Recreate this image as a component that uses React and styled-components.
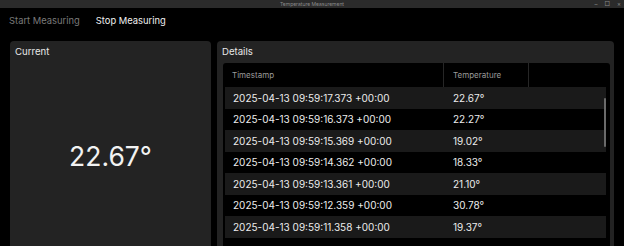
import React from 'react'
import styled, { createGlobalStyle } from 'styled-components'

const readings = [
  { time: '2025-04-13 09:59:17.373 +00:00', temp: '22.67°' },
  { time: '2025-04-13 09:59:16.373 +00:00', temp: '22.27°' },
  { time: '2025-04-13 09:59:15.369 +00:00', temp: '19.02°' },
  { time: '2025-04-13 09:59:14.362 +00:00', temp: '18.33°' },
  { time: '2025-04-13 09:59:13.361 +00:00', temp: '21.10°' },
  { time: '2025-04-13 09:59:12.359 +00:00', temp: '30.78°' },
  { time: '2025-04-13 09:59:11.358 +00:00', temp: '19.37°' },
]

const App = () => {
  return (
    <>
      <GlobalStyle />
      <Window>
        <TitleBar>
          <TitleText>Temperature Measurement</TitleText>
          <Controls>
            <span>–</span>
            <span>□</span>
            <span>×</span>
          </Controls>
        </TitleBar>
        <Toolbar>
          <ToolButton disabled>Start Measuring</ToolButton>
          <ToolButton>Stop Measuring</ToolButton>
        </Toolbar>
        <Content>
          <Panel $width='201px'>
            <PanelTitle>Current</PanelTitle>
            <CurrentBody>22.67°</CurrentBody>
          </Panel>
          <Panel>
            <PanelTitle>Details</PanelTitle>
            <Table>
              <HeaderRow>
                <HeaderCell $width='220px'>Timestamp</HeaderCell>
                <HeaderCell $width='85px'>Temperature</HeaderCell>
                <HeaderCell />
              </HeaderRow>
              {readings.map((r, i) => (
                <Row key={r.time} $odd={i % 2 === 0}>
                  <Cell $width='220px'>{r.time}</Cell>
                  <Cell>{r.temp}</Cell>
                </Row>
              ))}
              <ScrollThumb />
            </Table>
          </Panel>
        </Content>
      </Window>
    </>
  )
}

export default App

const GlobalStyle = createGlobalStyle`
  html, body {
    margin: 0;
    background: #000;
    overflow: hidden;
  }
  body {
    font-family: Inter, "Liberation Sans", sans-serif;
  }
`

const Window = styled.div`
  display: flex;
  flex-direction: column;
  width: 624px;
  height: 248px;
  background: #000;
  overflow: hidden;
`

const TitleBar = styled.div`
  position: relative;
  display: flex;
  align-items: center;
  justify-content: center;
  height: 8px;
  background: #2b2b2b;
`

const TitleText = styled.span`
  font-size: 5px;
  color: #8a8a8a;
`

const Controls = styled.div`
  position: absolute;
  right: 3px;
  top: 0;
  display: flex;
  gap: 7px;
  font-size: 6px;
  line-height: 8px;
  color: #8a8a8a;
`

const Toolbar = styled.div`
  display: flex;
  align-items: center;
  gap: 16px;
  height: 24px;
  padding-left: 9px;
`

const ToolButton = styled.button`
  background: none;
  border: none;
  padding: 0;
  font-family: Inter, "Liberation Sans", sans-serif;
  font-size: 9.4px;
  color: ${(p) => (p.disabled ? '#7a7a7a' : '#f0f0f0')};
`

const Content = styled.div`
  flex: 1;
  display: flex;
  gap: 6px;
  padding: 9px 10px 0 10px;
  min-height: 0;
`

const Panel = styled.section`
  display: flex;
  flex-direction: column;
  width: ${(p) => p.$width || 'auto'};
  flex: ${(p) => (p.$width ? 'none' : '1')};
  background: #232323;
  border-radius: 4px 4px 0 0;
  min-height: 0;
`

const PanelTitle = styled.div`
  height: 22px;
  line-height: 22px;
  padding: 0 5px;
  font-size: 9.6px;
  color: #e8e8e8;
`

const CurrentBody = styled.div`
  flex: 1;
  display: flex;
  align-items: center;
  justify-content: center;
  font-size: 26.5px;
  color: #f2f2f2;
`

const Table = styled.div`
  position: relative;
  flex: 1;
  margin: 0 4px 0 6px;
  background: #000;
  border-radius: 3px 3px 0 0;
  overflow: hidden;
`

const HeaderRow = styled.div`
  display: flex;
  height: 24px;
`

const HeaderCell = styled.div`
  display: flex;
  align-items: center;
  width: ${(p) => p.$width || 'auto'};
  flex: ${(p) => (p.$width ? 'none' : '1')};
  padding-left: 9px;
  box-sizing: border-box;
  font-size: 8px;
  color: #9a9a9a;
  & + & {
    border-left: 1px solid #262626;
  }
`

const Row = styled.div`
  display: flex;
  align-items: center;
  height: 21.5px;
  margin: 0 4px 0 2px;
  background: ${(p) => (p.$odd ? '#1a1a1a' : '#000')};
`

const Cell = styled.div`
  width: ${(p) => p.$width || 'auto'};
  flex: ${(p) => (p.$width ? 'none' : '1')};
  padding-left: 8px;
  box-sizing: border-box;
  font-size: 10px;
  color: #ececec;
`

const ScrollThumb = styled.div`
  position: absolute;
  right: 4px;
  top: 35px;
  width: 2px;
  height: 49px;
  border-radius: 1px;
  background: #6a6a6a;
`
